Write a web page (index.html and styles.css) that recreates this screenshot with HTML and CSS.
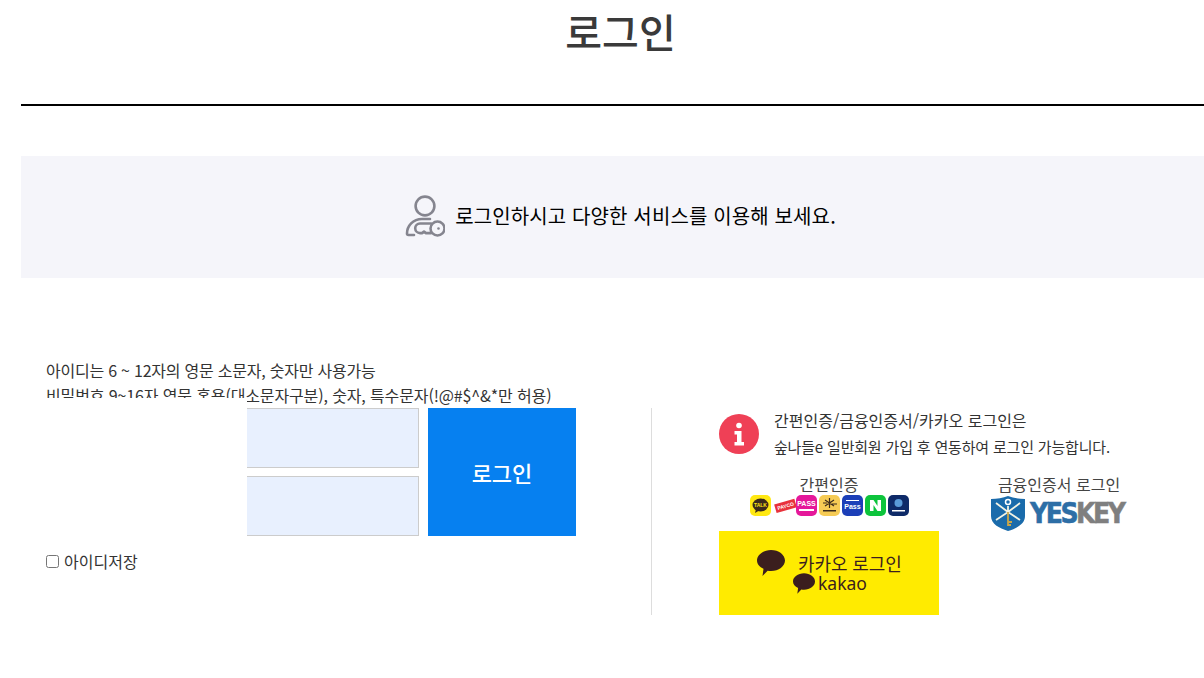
FILE: index.html
```html
<!DOCTYPE html>
<html lang="ko">
<head>
<meta charset="utf-8">
<title>로그인</title>
<link rel="stylesheet" href="styles.css">
</head>
<body>
<main class="page">
  <h1 class="title">로그인</h1>
  <section class="banner">
    <svg class="banner-icon" viewBox="0 0 40 42" fill="none">
      <circle cx="20" cy="11" r="9.400"/>
      <path d="M25 24H17C8 24 2 31 2 38.500c0 1 .7 1.500 1.500 1.500H9"/>
      <path d="M26 28.500H15a4.800 4.800 0 0 0 0 9.600h2l2-1.500 2 1.500h5"/>
      <circle cx="32.500" cy="33.500" r="7"/>
      <circle class="dot" cx="33.500" cy="33.500" r="1.300"/>
    </svg>
    <p class="banner-text">로그인하시고 다양한 서비스를 이용해 보세요.</p>
  </section>
  <section class="guide">
    <p class="guide-first">아이디는 6 ~ 12자의 영문 소문자, 숫자만 사용가능</p>
    <p>비밀번호 9~16자 영문 혼용(대소문자구분), 숫자, 특수문자(!@#$^&amp;*만 허용)</p>
  </section>
  <section class="login-row">
    <div class="login-left">
      <div class="form-line">
        <div class="label-mask"></div>
        <div class="fields">
          <input class="field" type="text" aria-label="아이디">
          <input class="field" type="password" aria-label="비밀번호">
        </div>
        <button class="submit" type="button">로그인</button>
      </div>
      <label class="save"><input class="save-box" type="checkbox">아이디저장</label>
    </div>
    <div class="login-right">
      <div class="notice">
        <svg class="notice-icon" viewBox="0 0 40 40">
          <circle class="notice-bg" cx="20" cy="20" r="20"/>
          <circle class="notice-fg" cx="20" cy="11.500" r="2.800"/>
          <path class="notice-fg" d="M15.500 17h7v11h2.500v3.500H15.500V28h2.500v-7.500h-2.500z"/>
        </svg>
        <div class="notice-text">
          <p class="notice-first">간편인증/금융인증서/카카오 로그인은</p>
          <p class="notice-second">숲나들e 일반회원 가입 후 연동하여 로그인 가능합니다.</p>
        </div>
      </div>
      <div class="methods">
        <div class="method-simple">
          <div class="method-title">간편인증</div>
          <svg class="apps" width="160" height="22" viewBox="0 0 160 22">
            <rect class="a-talk" x="0" y="0" width="21" height="21" rx="5"/>
            <ellipse class="a-dark" cx="10.500" cy="10" rx="8" ry="6.500"/>
            <path class="a-dark" d="M6 14l-1 4 5-3z"/>
            <text class="a-tiny a-yellow" x="10.500" y="12" text-anchor="middle">TALK</text>

            <g transform="rotate(-16 35 11)">
              <rect class="a-payco" x="25" y="6.500" width="21" height="9"/>
              <text class="a-tiny a-white" x="35.500" y="13" text-anchor="middle">PAYCO</text>
            </g>

            <rect class="a-pass" x="46" y="0" width="21" height="21" rx="5"/>
            <text class="a-small a-white" x="56.500" y="11" text-anchor="middle">PASS</text>
            <rect class="a-white-fill" x="49" y="14" width="15" height="2"/>

            <rect class="a-kb" x="69" y="0" width="21" height="21" rx="5"/>
            <path class="a-kb-mark" d="M79.500 3v10M75 5l9 6M84 5l-9 6M73 8h4M82 9h5"/>
            <rect class="a-dark" x="73" y="15" width="13" height="1.500"/>

            <rect class="a-samsung" x="92" y="0" width="21" height="21" rx="5"/>
            <rect class="a-white-fill" x="96" y="5" width="13" height="1"/>
            <text class="a-small a-white" x="102.500" y="14" text-anchor="middle">Pass</text>

            <rect class="a-naver" x="115" y="0" width="21" height="21" rx="5"/>
            <path class="a-white-fill" d="M120 5h3.500l4 6V5h3.500v11h-3.500l-4-6v6H120z"/>

            <rect class="a-shinhan" x="138" y="0" width="21" height="21" rx="5"/>
            <circle class="a-blue" cx="148.500" cy="8" r="4"/>
            <rect class="a-white-fill" x="142" y="15" width="13" height="1.500"/>
          </svg>
        </div>
        <div class="method-cert">
          <div class="method-title">금융인증서 로그인</div>
          <div class="yeskey">
            <svg class="shield" viewBox="0 0 34 35">
              <path class="shield-bg" d="M0 3C6 3 12 2 17 0c5 2 11 3 17 3v17c0 8-8 12-17 15C8 32 0 28 0 20z"/>
              <path class="shield-key" d="M17 10v8M5 7l12 9 12-9M5 24l12-8 12 8"/>
              <circle class="shield-ring" cx="17" cy="6" r="2.500"/>
              <path class="shield-gold" d="M17 16v14M17 26h4M17 29h3"/>
            </svg>
            <span class="yes">YES</span><span class="key">KEY</span>
          </div>
        </div>
      </div>
      <div class="kakao">
        <div class="kakao-line">
          <svg class="bubble-lg" viewBox="0 0 28 26"><path d="M14 0c7.700 0 14 4.700 14 10.500S21.700 21 14 21c-1.200 0-2.300-.1-3.400-.3L5.500 26l1-7.200C2.500 17 0 14 0 10.500 0 4.700 6.300 0 14 0z"/></svg>
          <span class="kakao-label">카카오 로그인</span>
        </div>
        <div class="kakao-sub">
          <svg class="bubble-sm" viewBox="0 0 28 26"><path d="M14 0c7.700 0 14 4.700 14 10.500S21.700 21 14 21c-1.200 0-2.300-.1-3.400-.3L5.500 26l1-7.200C2.500 17 0 14 0 10.500 0 4.700 6.300 0 14 0z"/></svg>
          <span class="kakao-word">kakao</span>
        </div>
      </div>
    </div>
  </section>
</main>
</body>
</html>
```

FILE: styles.css
```css
* { box-sizing: border-box; }
html, body { margin: 0; padding: 0; background: #fff; overflow-x: hidden; }
body { font-family: "Noto Sans CJK KR", "Noto Sans", sans-serif; color: #333; }
p { margin: 0; }

.page { width: 1199px; margin-left: 21px; }

.title {
  margin: 0;
  height: 106px;
  border-bottom: 2px solid #000;
  font-size: 40px;
  font-weight: 500;
  line-height: 62px;
  text-align: center;
  color: #3a3a3a;
}

.banner {
  margin-top: 50px;
  height: 122px;
  background: #f5f5fa;
  display: flex;
  align-items: center;
  justify-content: center;
  gap: 10px;
}
.banner-icon { width: 40px; height: 42px; margin-top: -2px; stroke: #85858f; stroke-width: 2.600; stroke-linecap: round; stroke-linejoin: round; }
.banner-icon .dot { fill: #85858f; stroke: none; }
.banner-text { font-size: 20px; letter-spacing: 0.130px; color: #000; line-height: 28px; margin-top: -2px; }

.guide { margin-top: 80px; padding-left: 25px; font-size: 16px; letter-spacing: -0.130px; line-height: 25px; }
.guide-first { letter-spacing: -0.230px; }

.login-row { display: flex; align-items: flex-start; height: 207px; }

.login-left { width: 631px; height: 207px; flex: none; border-right: 1px solid #ddd; }
.form-line { display: flex; align-items: flex-start; }
.label-mask { position: relative; width: 226px; height: 138px; margin-top: -10px; background: #fff; }
.fields { width: 172px; display: flex; flex-direction: column; gap: 8px; }
.field {
  display: block;
  width: 172px;
  height: 60px;
  padding: 0;
  background: #e8f0fe;
  border: 1px solid #ccc;
  border-left: 0;
  border-radius: 0;
  outline: 0;
}
.submit {
  margin-left: 9px;
  width: 148px;
  height: 128px;
  border: 0;
  padding: 0;
  background: #0680f0;
  color: #fff;
  font-family: inherit;
  font-size: 22px;
  font-weight: 500;
}

.save { display: flex; align-items: center; margin: 14px 0 0 25px; font-size: 16px; line-height: 22px; }
.save-box { width: 13px; height: 13px; margin: 0 5px 0 0; }

.login-right { flex: none; width: 480px; padding-left: 67px; }
.notice { display: flex; align-items: center; gap: 15px; height: 52px; }
.notice-icon { width: 40px; height: 40px; flex: none; }
.notice-bg { fill: #ef4056; }
.notice-fg { fill: #fff; }
.notice-text { line-height: 25px; margin-top: -2px; }
.notice-first { font-size: 16px; }
.notice-second { font-size: 15px; letter-spacing: -0.180px; margin-top: 1px; }

.methods { display: flex; margin-top: 13px; }
.method-simple { width: 220px; flex: none; }
.method-cert { width: 140px; margin-left: 50px; flex: none; }
.method-title { font-size: 16px; line-height: 23px; text-align: center; color: #444; white-space: nowrap; }
.apps { display: block; margin: -1px 0 0 31px; }

.a-talk { fill: #ffe812; }
.a-kb { fill: #f6cb55; }
.a-kb-mark { fill: none; stroke: #3b2a1c; stroke-width: 1.200; }
.a-pass { fill: #e5189a; }
.a-payco { fill: #e8323c; }
.a-samsung { fill: #1c3fb8; }
.a-naver { fill: #0dc43c; }
.a-shinhan { fill: #0e2a68; }
.a-blue { fill: #5a9bd8; }
.a-dark { fill: #3b2a1c; }
.a-white, .a-white-fill { fill: #fff; }
.a-yellow { fill: #ffe812; }
.a-tiny { font-family: "Liberation Sans", sans-serif; font-size: 5px; font-weight: 700; }
.a-small { font-family: "Liberation Sans", sans-serif; font-size: 7px; font-weight: 700; }

.yeskey {
  display: flex;
  align-items: center;
  margin: 0 0 0 2px;
  font-family: "DejaVu Sans Condensed", "DejaVu Sans", sans-serif;
  font-weight: 700;
  font-size: 28px;
  line-height: 35px;
  letter-spacing: -2.500px;
  -webkit-text-stroke: 0.500px currentColor;
  white-space: nowrap;
}
.shield { width: 34px; height: 35px; margin-right: 5px; flex: none; }
.shield-bg { fill: #1a6bab; }
.shield-key { fill: none; stroke: #f3f3e4; stroke-width: 1.800; }
.shield-ring { fill: none; stroke: #fff; stroke-width: 1.500; }
.shield-gold { fill: none; stroke: #c9a64a; stroke-width: 1.800; }
.yes { color: #2d6ea6; }
.key { color: #7f7f7f; }

.kakao {
  width: 220px;
  height: 84px;
  margin-top: 0;
  background: #ffeb00;
  color: #3b1e1e;
  padding-top: 18px;
}
.kakao-line { display: flex; align-items: flex-start; padding-left: 38px; height: 24px; }
.bubble-lg { width: 28px; height: 26px; margin-top: 1px; fill: #3b1e1e; flex: none; }
.kakao-label { margin: 4px 0 0 13px; font-size: 18px; letter-spacing: -0.100px; line-height: 20px; }
.kakao-sub { display: flex; align-items: center; padding-left: 74px; height: 20px; }
.bubble-sm { width: 22px; height: 21px; fill: #3b1e1e; flex: none; }
.kakao-word { margin-left: 3px; font-family: "Noto Sans", sans-serif; font-size: 17.500px; line-height: 20px; }
```
